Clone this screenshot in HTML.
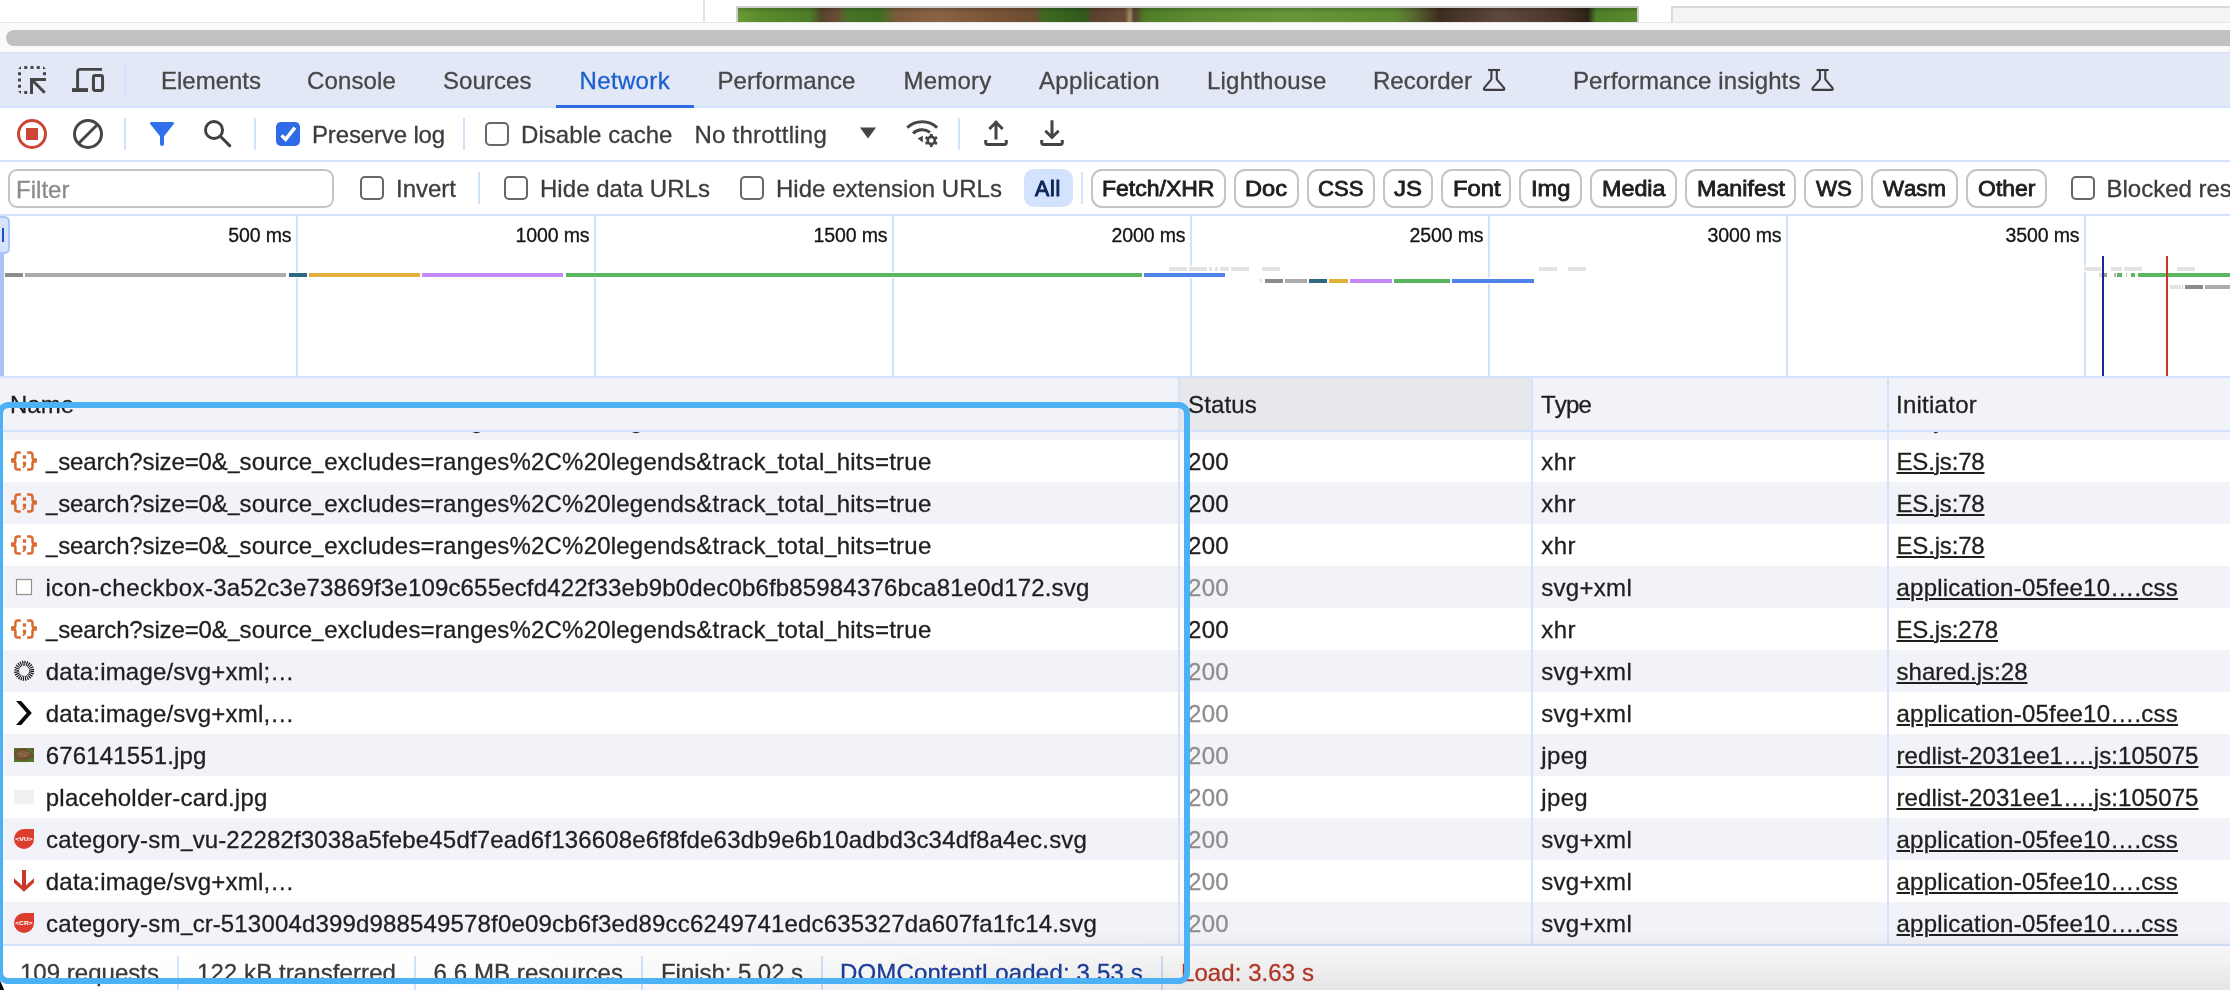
<!DOCTYPE html>
<html lang="en"><head><meta charset="utf-8"><title>DevTools - Network</title>
<style>
html,body{margin:0;padding:0;}
body{width:2230px;height:990px;overflow:hidden;position:relative;background:#fff;font-family:"Liberation Sans",sans-serif;}
.a{position:absolute;}
.t{position:absolute;white-space:pre;line-height:1;font-kerning:none;-webkit-text-stroke:0.3px currentColor;}
i.u{display:inline-block;width:12px;font-style:normal;letter-spacing:0;transform:translateY(-2.3px) scaleX(.86);transform-origin:0 0;}
#txt{position:absolute;left:0;top:0;width:2230px;height:990px;will-change:transform;}
.v{position:absolute;width:2px;background:#d3e3fd;}
.h{position:absolute;height:2px;background:#d3e3fd;left:0;width:2230px;}
.cb{position:absolute;width:20px;height:20px;border:2px solid #676767;border-radius:5px;background:#fff;}
.pill{position:absolute;top:169px;height:35px;border:2px solid #c4c4c4;border-radius:11px;background:#fff;}
svg{position:absolute;overflow:visible;}
</style></head><body>
<div class="a" style="left:703px;top:0;width:2px;height:22px;background:#e4e4e4"></div>
<div class="a" style="left:736px;top:6px;width:903px;height:16px;background:#cfcfcf"></div>
<div class="a" style="left:738px;top:8px;width:899px;height:14px;overflow:hidden;background:linear-gradient(90deg,#6a9a36 0.00%,#5b8c2c 2.45%,#4c7c26 8.01%,#55432c 9.34%,#6b4b36 10.90%,#477327 12.24%,#3f6e22 15.80%,#7c5a3d 17.69%,#8a6343 22.47%,#7a5536 28.03%,#6d4c33 33.04%,#3d6a20 33.93%,#2f5a1a 38.60%,#5a4030 39.49%,#6a4a36 43.05%,#a09064 43.60%,#55402e 44.05%,#4e7e28 45.27%,#5b8a30 50.28%,#67963a 61.40%,#5b8a30 73.08%,#5a6a30 74.97%,#3e2c20 78.09%,#5e4a3c 84.76%,#4a3528 91.43%,#2c2418 94.55%,#4f7f28 95.44%,#5a8a2e 100.00%)"><div class="a" style="left:0;top:0;width:899px;height:14px;background:linear-gradient(180deg,rgba(0,0,0,.18) 0,rgba(0,0,0,0) 35%,rgba(0,0,0,0) 100%)"></div></div>
<div class="a" style="left:1671px;top:6px;width:600px;height:16px;background:#dadada"></div>
<div class="a" style="left:1673px;top:8px;width:600px;height:14px;background:#f4f4f4"></div>
<div class="a" style="left:0;top:22px;width:2230px;height:30px;background:#fafafa;border-top:1px solid #e7e7e7;box-sizing:border-box"></div>
<div class="a" style="left:6px;top:30px;width:2300px;height:16px;border-radius:8px;background:#c1c1c1"></div>
<div class="a" style="left:0;top:52px;width:2230px;height:55px;background:#e3e8f6"></div>
<div class="a" style="left:0;top:52px;width:2230px;height:1px;background:#d5e1fa"></div>
<div class="a" style="left:0;top:106px;width:2230px;height:2px;background:#d3e3fd"></div>
<div class="v" style="left:124px;top:64px;height:32px"></div>
<div class="a" style="left:556px;top:104.6px;width:138px;height:3.4px;background:#2b6be6"></div>
<div class="a" style="left:0;top:108px;width:2230px;height:53px;background:#fff"></div>
<div class="v" style="left:124px;top:118px;height:32px"></div>
<div class="v" style="left:254px;top:118px;height:32px"></div>
<div class="v" style="left:463px;top:118px;height:32px"></div>
<div class="v" style="left:958px;top:118px;height:32px"></div>
<div class="h" style="top:160px"></div>
<div class="a" style="left:8px;top:169px;width:322px;height:35px;border:2px solid #c4c4c4;border-radius:9px;background:#fff"></div>
<div class="v" style="left:478px;top:172px;height:32px"></div>
<div class="v" style="left:1081px;top:172px;height:32px"></div>
<div class="a" style="left:1024px;top:169px;width:49px;height:38px;border-radius:10px;background:#d3e3fd"></div>
<div class="pill" style="left:1091px;width:131px"></div>
<div class="pill" style="left:1234px;width:61px"></div>
<div class="pill" style="left:1307px;width:64px"></div>
<div class="pill" style="left:1383px;width:46px"></div>
<div class="pill" style="left:1441px;width:66px"></div>
<div class="pill" style="left:1519px;width:59px"></div>
<div class="pill" style="left:1590px;width:83px"></div>
<div class="pill" style="left:1685px;width:107px"></div>
<div class="pill" style="left:1804px;width:55px"></div>
<div class="pill" style="left:1871px;width:83px"></div>
<div class="pill" style="left:1966px;width:77px"></div>
<div class="a" style="left:276px;top:122px;width:24px;height:24px;border-radius:5px;background:#2f6be6"><svg style="left:0;top:0" width="24" height="24" viewBox="0 0 24 24"><path d="M5.6 13.4L9.6 17.4L18.9 5.6" fill="none" stroke="#fff" stroke-width="3.4"/></svg></div>
<div class="cb" style="left:485px;top:122px"></div>
<div class="cb" style="left:360px;top:176px"></div>
<div class="cb" style="left:504px;top:176px"></div>
<div class="cb" style="left:740px;top:176px"></div>
<div class="cb" style="left:2071px;top:176px"></div>
<div class="h" style="top:214px"></div>
<div class="a" style="left:0;top:216px;width:2230px;height:160px;background:#fff"></div>
<div class="v" style="left:296px;top:216px;height:160px"></div>
<div class="v" style="left:594px;top:216px;height:160px"></div>
<div class="v" style="left:892px;top:216px;height:160px"></div>
<div class="v" style="left:1190px;top:216px;height:160px"></div>
<div class="v" style="left:1488px;top:216px;height:160px"></div>
<div class="v" style="left:1786px;top:216px;height:160px"></div>
<div class="v" style="left:2084px;top:216px;height:160px"></div>
<div class="a" style="left:0;top:250px;width:4px;height:126px;background:#aac2f6"></div>
<div class="a" style="left:-3px;top:216px;width:12.5px;height:37.5px;background:#d7e3fb;border:2px solid #a9c4f8;border-radius:0 5.5px 5.5px 0;box-sizing:border-box"></div>
<div class="a" style="left:2px;top:228px;width:2px;height:14px;background:#1a4fc8"></div>
<div class="a" style="left:5px;top:273px;width:18px;height:4px;background:#8c8c8c;box-shadow:0 0 0 1px #fff"></div>
<div class="a" style="left:25px;top:273px;width:261.3px;height:4px;background:#ababab;box-shadow:0 0 0 1px #fff"></div>
<div class="a" style="left:288.5px;top:273px;width:18.5px;height:4px;background:#2b6a80;box-shadow:0 0 0 1px #fff"></div>
<div class="a" style="left:308.7px;top:273px;width:111.3px;height:4px;background:#e2b13c;box-shadow:0 0 0 1px #fff"></div>
<div class="a" style="left:421.8px;top:273px;width:141.7px;height:4px;background:#c58af9;box-shadow:0 0 0 1px #fff"></div>
<div class="a" style="left:565.7px;top:273px;width:576.1px;height:4px;background:#5bb660;box-shadow:0 0 0 1px #fff"></div>
<div class="a" style="left:1144px;top:273px;width:81px;height:4px;background:#5083ea;box-shadow:0 0 0 1px #fff"></div>
<div class="a" style="left:1168.7px;top:267px;width:17.9px;height:4px;background:#e3e3e3;box-shadow:0 0 0 1px #fff"></div>
<div class="a" style="left:1188.8px;top:267px;width:18px;height:4px;background:#e3e3e3;box-shadow:0 0 0 1px #fff"></div>
<div class="a" style="left:1208.8px;top:267px;width:3.2px;height:4px;background:#e3e3e3;box-shadow:0 0 0 1px #fff"></div>
<div class="a" style="left:1214.8px;top:267px;width:3.4px;height:4px;background:#e3e3e3;box-shadow:0 0 0 1px #fff"></div>
<div class="a" style="left:1220.4px;top:267px;width:8.2px;height:4px;background:#e3e3e3;box-shadow:0 0 0 1px #fff"></div>
<div class="a" style="left:1231.2px;top:267px;width:17.8px;height:4px;background:#e3e3e3;box-shadow:0 0 0 1px #fff"></div>
<div class="a" style="left:1261.7px;top:267px;width:18.1px;height:4px;background:#e3e3e3;box-shadow:0 0 0 1px #fff"></div>
<div class="a" style="left:1260.2px;top:279px;width:1.5px;height:4px;background:#e3e3e3;box-shadow:0 0 0 1px #fff"></div>
<div class="a" style="left:1264.5px;top:279px;width:18.3px;height:4px;background:#8c8c8c;box-shadow:0 0 0 1px #fff"></div>
<div class="a" style="left:1285px;top:279px;width:21.9px;height:4px;background:#ababab;box-shadow:0 0 0 1px #fff"></div>
<div class="a" style="left:1309px;top:279px;width:18.2px;height:4px;background:#2b6a80;box-shadow:0 0 0 1px #fff"></div>
<div class="a" style="left:1329.1px;top:279px;width:18.9px;height:4px;background:#e2b13c;box-shadow:0 0 0 1px #fff"></div>
<div class="a" style="left:1350px;top:279px;width:42px;height:4px;background:#c58af9;box-shadow:0 0 0 1px #fff"></div>
<div class="a" style="left:1394px;top:279px;width:56px;height:4px;background:#5bb660;box-shadow:0 0 0 1px #fff"></div>
<div class="a" style="left:1452px;top:279px;width:82px;height:4px;background:#5083ea;box-shadow:0 0 0 1px #fff"></div>
<div class="a" style="left:1539px;top:267px;width:18px;height:4px;background:#e3e3e3;box-shadow:0 0 0 1px #fff"></div>
<div class="a" style="left:1568px;top:267px;width:18px;height:4px;background:#e3e3e3;box-shadow:0 0 0 1px #fff"></div>
<div class="a" style="left:2083.6px;top:267px;width:17.4px;height:4px;background:#e3e3e3;box-shadow:0 0 0 1px #fff"></div>
<div class="a" style="left:2111.2px;top:267px;width:10.9px;height:4px;background:#e3e3e3;box-shadow:0 0 0 1px #fff"></div>
<div class="a" style="left:2124.3px;top:267px;width:18px;height:4px;background:#e3e3e3;box-shadow:0 0 0 1px #fff"></div>
<div class="a" style="left:2177px;top:267px;width:18px;height:4px;background:#e3e3e3;box-shadow:0 0 0 1px #fff"></div>
<div class="a" style="left:2099.3px;top:273px;width:2.7px;height:4px;background:#dcdcdc;box-shadow:0 0 0 1px #fff"></div>
<div class="a" style="left:2104px;top:273px;width:2.9px;height:4px;background:#9a9a9a;box-shadow:0 0 0 1px #fff"></div>
<div class="a" style="left:2113.7px;top:273px;width:1.9px;height:4px;background:#b5b5b5;box-shadow:0 0 0 1px #fff"></div>
<div class="a" style="left:2117.2px;top:273px;width:4.7px;height:4px;background:#5bb660;box-shadow:0 0 0 1px #fff"></div>
<div class="a" style="left:2125.5px;top:273px;width:1.2px;height:4px;background:#a5d9a8;box-shadow:0 0 0 1px #fff"></div>
<div class="a" style="left:2130.5px;top:273px;width:4.6px;height:4px;background:#5bb660;box-shadow:0 0 0 1px #fff"></div>
<div class="a" style="left:2137.9px;top:273px;width:92.1px;height:4px;background:#5bb660;box-shadow:0 0 0 1px #fff"></div>
<div class="a" style="left:2170.1px;top:285px;width:10.7px;height:4px;background:#e3e3e3;box-shadow:0 0 0 1px #fff"></div>
<div class="a" style="left:2182px;top:285px;width:1px;height:4px;background:#cfcfcf;box-shadow:0 0 0 1px #fff"></div>
<div class="a" style="left:2185px;top:285px;width:18px;height:4px;background:#8c8c8c;box-shadow:0 0 0 1px #fff"></div>
<div class="a" style="left:2205px;top:285px;width:25px;height:4px;background:#ababab;box-shadow:0 0 0 1px #fff"></div>
<div class="a" style="left:2102px;top:256px;width:2px;height:120px;background:#0b2f8f"></div>
<div class="a" style="left:2166px;top:256px;width:2px;height:120px;background:#c93425"></div>
<div class="h" style="top:376px"></div>
<div class="a" style="left:0;top:378px;width:2230px;height:53px;background:#f2f3f9"></div>
<div class="a" style="left:1180px;top:378px;width:352px;height:53px;background:#e7e8ec"></div>
<div class="h" style="top:430px"></div>
<div class="a" style="left:0;top:432px;width:2230px;height:8px;background:#f2f3f9"></div>
<div class="a" style="left:0;top:440px;width:2230px;height:42px;background:#fff"></div>
<div class="a" style="left:0;top:482px;width:2230px;height:42px;background:#f2f3f9"></div>
<div class="a" style="left:0;top:524px;width:2230px;height:42px;background:#fff"></div>
<div class="a" style="left:0;top:566px;width:2230px;height:42px;background:#f2f3f9"></div>
<div class="a" style="left:0;top:608px;width:2230px;height:42px;background:#fff"></div>
<div class="a" style="left:0;top:650px;width:2230px;height:42px;background:#f2f3f9"></div>
<div class="a" style="left:0;top:692px;width:2230px;height:42px;background:#fff"></div>
<div class="a" style="left:0;top:734px;width:2230px;height:42px;background:#f2f3f9"></div>
<div class="a" style="left:0;top:776px;width:2230px;height:42px;background:#fff"></div>
<div class="a" style="left:0;top:818px;width:2230px;height:42px;background:#f2f3f9"></div>
<div class="a" style="left:0;top:860px;width:2230px;height:42px;background:#fff"></div>
<div class="a" style="left:0;top:902px;width:2230px;height:42px;background:#f2f3f9"></div>
<div class="v" style="left:1178px;top:378px;height:567px"></div>
<div class="v" style="left:1531px;top:378px;height:567px"></div>
<div class="v" style="left:1887px;top:378px;height:567px"></div>
<div class="a" style="left:0;top:944px;width:2230px;height:46px;background:#fff"></div>
<div class="h" style="top:944px"></div>
<div class="v" style="left:177px;top:956px;height:34px"></div>
<div class="v" style="left:414px;top:956px;height:34px"></div>
<div class="v" style="left:641px;top:956px;height:34px"></div>
<div class="v" style="left:821px;top:956px;height:34px"></div>
<div class="v" style="left:1161px;top:956px;height:34px"></div>
<svg style="left:0;top:0" width="2230" height="990" viewBox="0 0 2230 990"><path d="M21 66v3h-3z M43 66l3 3h-3z M18 91h3v3z" fill="#454545"/>
<rect x="24.25" y="66" width="3" height="3" fill="#454545"/>
<rect x="30.5" y="66" width="3" height="3" fill="#454545"/>
<rect x="36.75" y="66" width="3" height="3" fill="#454545"/>
<rect x="18" y="72.25" width="3" height="3" fill="#454545"/>
<rect x="18" y="78.5" width="3" height="3" fill="#454545"/>
<rect x="18" y="84.75" width="3" height="3" fill="#454545"/>
<rect x="43" y="72.25" width="3" height="3" fill="#454545"/>
<rect x="24.25" y="91" width="3" height="3" fill="#454545"/>
<path d="M30 78h16v3h-10.9l10.7 10.7-2.1 2.1-10.7-10.7v10.9h-3z" fill="#454545"/>
<path d="M102 69.4H79.8a2.2 2.2 0 0 0-2.2 2.2V90" fill="none" stroke="#454545" stroke-width="2.9"/>
<rect x="72" y="88.1" width="16" height="3.9" fill="#454545"/>
<rect x="93.45" y="75.55" width="9.1" height="14.9" rx="1.6" fill="none" stroke="#454545" stroke-width="3"/>
<g fill="none" stroke="#3e3e3e" stroke-width="2.1" stroke-linejoin="round" stroke-linecap="round"><path d="M1488.1 70H1500.1" stroke-linecap="butt"/><path d="M1491.4 70V79.3L1484.2 87.9Q1483.1 89.9 1485.4 89.9H1502.8Q1505.1 89.9 1504 87.9L1496.8 79.3V70"/></g>
<g fill="none" stroke="#3e3e3e" stroke-width="2.1" stroke-linejoin="round" stroke-linecap="round"><path d="M1816.6 70H1828.6" stroke-linecap="butt"/><path d="M1819.9 70V79.3L1812.7 87.9Q1811.6 89.9 1813.9 89.9H1831.3Q1833.6 89.9 1832.5 87.9L1825.3 79.3V70"/></g>
<circle cx="32" cy="134" r="13.5" fill="none" stroke="#cb4436" stroke-width="3"/><rect x="26" y="128" width="12" height="12" fill="#cb4436"/>
<circle cx="88" cy="134" r="13.5" fill="none" stroke="#454545" stroke-width="3"/><path d="M78.5 143.5L97.5 124.5" stroke="#454545" stroke-width="3"/>
<path d="M151.2 122h21.6a1.2 1.2 0 0 1 .95 1.95L164 136.3v7.7a2 2 0 0 1-4 0v-7.7l-9.75-12.35a1.2 1.2 0 0 1 .95-1.95z" fill="#3070ec"/>
<circle cx="214" cy="130" r="8.55" fill="none" stroke="#404040" stroke-width="2.9"/><path d="M220.3 136.3L230.6 146.6" stroke="#404040" stroke-width="3"/>
<path d="M860 127.5h16l-8 11z" fill="#454545"/>
<g fill="none" stroke="#454545" stroke-width="3"><path d="M907.3 127.6A22 22 0 0 1 937.1 127.6"/><path d="M913 133.3A13.5 13.5 0 0 1 930 132.4"/></g>
<path d="M917.6 138.6l5.2-2.9v6.9z" fill="#454545"/>
<circle cx="931.3" cy="140.5" r="3.6" fill="none" stroke="#454545" stroke-width="2.6"/>
<path d="M934.94 142.60L937.02 143.80" stroke="#454545" stroke-width="2.8"/>
<path d="M931.30 144.70L931.30 147.10" stroke="#454545" stroke-width="2.8"/>
<path d="M927.66 142.60L925.58 143.80" stroke="#454545" stroke-width="2.8"/>
<path d="M927.66 138.40L925.58 137.20" stroke="#454545" stroke-width="2.8"/>
<path d="M931.30 136.30L931.30 133.90" stroke="#454545" stroke-width="2.8"/>
<path d="M934.94 138.40L937.02 137.20" stroke="#454545" stroke-width="2.8"/>
<g fill="none" stroke="#454545" stroke-width="3"><path d="M996 139.6V120.8M989.3 129L996 122.3l6.7 6.7"/><path d="M985.7 140.1V142.5a2 2 0 0 0 2 2h16.6a2 2 0 0 0 2-2V140.1"/></g>
<g fill="none" stroke="#454545" stroke-width="3"><path d="M1052 120.2V138M1045.3 130.8L1052 137.5l6.7-6.7"/><path d="M1041.7 140.1V142.5a2 2 0 0 0 2 2h16.6a2 2 0 0 0 2-2V140.1"/></g>
<g fill="none" stroke="#d96a30" stroke-width="2.5"><path d="M20.8 452.4H18Q15.4 452.4 15.4 455V457.6Q15.4 460.5 12 460.5Q15.4 460.5 15.4 463.4V467Q15.4 469.6 18 469.6H20.8"/><path d="M27.1 452.4H29.9Q32.5 452.4 32.5 455V457.6Q32.5 460.5 35.9 460.5Q32.5 460.5 32.5 463.4V467Q32.5 469.6 29.9 469.6H27.1"/></g><rect x="11" y="458.3" width="3.2" height="4.4" fill="#d96a30"/><rect x="33.7" y="458.3" width="3.2" height="4.4" fill="#d96a30"/><rect x="22.9" y="455.3" width="3.2" height="3.4" fill="#d96a30"/><path d="M22.9 461.8h3.2v2.6q0 2.6-3 3.8l-.9-1.2q1.4-.8 1.5-2h-.8z" fill="#d96a30"/>
<g fill="none" stroke="#d96a30" stroke-width="2.5"><path d="M20.8 494.4H18Q15.4 494.4 15.4 497V499.6Q15.4 502.5 12 502.5Q15.4 502.5 15.4 505.4V509Q15.4 511.6 18 511.6H20.8"/><path d="M27.1 494.4H29.9Q32.5 494.4 32.5 497V499.6Q32.5 502.5 35.9 502.5Q32.5 502.5 32.5 505.4V509Q32.5 511.6 29.9 511.6H27.1"/></g><rect x="11" y="500.3" width="3.2" height="4.4" fill="#d96a30"/><rect x="33.7" y="500.3" width="3.2" height="4.4" fill="#d96a30"/><rect x="22.9" y="497.3" width="3.2" height="3.4" fill="#d96a30"/><path d="M22.9 503.8h3.2v2.6q0 2.6-3 3.8l-.9-1.2q1.4-.8 1.5-2h-.8z" fill="#d96a30"/>
<g fill="none" stroke="#d96a30" stroke-width="2.5"><path d="M20.8 536.4H18Q15.4 536.4 15.4 539V541.6Q15.4 544.5 12 544.5Q15.4 544.5 15.4 547.4V551Q15.4 553.6 18 553.6H20.8"/><path d="M27.1 536.4H29.9Q32.5 536.4 32.5 539V541.6Q32.5 544.5 35.9 544.5Q32.5 544.5 32.5 547.4V551Q32.5 553.6 29.9 553.6H27.1"/></g><rect x="11" y="542.3" width="3.2" height="4.4" fill="#d96a30"/><rect x="33.7" y="542.3" width="3.2" height="4.4" fill="#d96a30"/><rect x="22.9" y="539.3" width="3.2" height="3.4" fill="#d96a30"/><path d="M22.9 545.8h3.2v2.6q0 2.6-3 3.8l-.9-1.2q1.4-.8 1.5-2h-.8z" fill="#d96a30"/>
<g fill="none" stroke="#d96a30" stroke-width="2.5"><path d="M20.8 620.4H18Q15.4 620.4 15.4 623V625.6Q15.4 628.5 12 628.5Q15.4 628.5 15.4 631.4V635Q15.4 637.6 18 637.6H20.8"/><path d="M27.1 620.4H29.9Q32.5 620.4 32.5 623V625.6Q32.5 628.5 35.9 628.5Q32.5 628.5 32.5 631.4V635Q32.5 637.6 29.9 637.6H27.1"/></g><rect x="11" y="626.3" width="3.2" height="4.4" fill="#d96a30"/><rect x="33.7" y="626.3" width="3.2" height="4.4" fill="#d96a30"/><rect x="22.9" y="623.3" width="3.2" height="3.4" fill="#d96a30"/><path d="M22.9 629.8h3.2v2.6q0 2.6-3 3.8l-.9-1.2q1.4-.8 1.5-2h-.8z" fill="#d96a30"/>
<rect x="16.5" y="579.5" width="15" height="15" fill="#fff" stroke="#90908d" stroke-width="1.2"/>
<circle cx="24.15" cy="670.8" r="7.5" fill="none" stroke="#111" stroke-width="5" stroke-dasharray="1.05 0.9135"/>
<path d="M16.1 701h5.1l10.6 11.9-10.6 12h-5.1l10.6-12z" fill="#0a0a0a"/>
<rect x="14" y="748" width="20" height="14" fill="#6e5130"/><path d="M14 748h6l-3 2-3 1z M26 748h4l4 5v2z M14 757l3 3 8 1.2 9-4.2v5H14z" fill="#4c7a26"/><path d="M17 752q3-2 7-1.5t6 3.500q-1 3-6 3.500t-7-2z" fill="#7d6040"/><path d="M19 753h2v1h-2z M24 755h2v1h-2z M27 752h1v1h-1z" fill="#9a8260"/>
<rect x="14" y="790" width="20" height="14" fill="#f1f1f1"/>
<path d="M24 829 h10 v10 a10 10 0 1 1 -10 -10z" fill="#dc3d2f"/><text x="24" y="841.3" text-anchor="middle" font-family="Liberation Sans, sans-serif" font-weight="bold" font-size="6.2" fill="#fff" textLength="17.6" lengthAdjust="spacingAndGlyphs">&lt;VU&gt;</text>
<path d="M24 913 h10 v10 a10 10 0 1 1 -10 -10z" fill="#dc3d2f"/><text x="24" y="925.3" text-anchor="middle" font-family="Liberation Sans, sans-serif" font-weight="bold" font-size="6.2" fill="#fff" textLength="17.6" lengthAdjust="spacingAndGlyphs">&lt;CR&gt;</text>
<path d="M22 870h4v15.4l7.9-7.2v4.5L23.95 891.8 14 882.7v-4.5l8 7.2z" fill="#c8382b"/></svg>
<div id="txt"><span class="t" style="font-size:24px;top:68.68px;color:#474747;letter-spacing:-0.006px;left:161.00px;">Elements</span>
<span class="t" style="font-size:24px;top:68.68px;color:#474747;letter-spacing:0.134px;left:307.00px;">Console</span>
<span class="t" style="font-size:24px;top:68.68px;color:#474747;letter-spacing:0.065px;left:443.00px;">Sources</span>
<span class="t" style="font-size:24px;top:68.68px;color:#1b5fd1;letter-spacing:0.353px;left:579.50px;">Network</span>
<span class="t" style="font-size:24px;top:68.68px;color:#474747;letter-spacing:0.055px;left:717.50px;">Performance</span>
<span class="t" style="font-size:24px;top:68.68px;color:#474747;letter-spacing:0.221px;left:903.50px;">Memory</span>
<span class="t" style="font-size:24px;top:68.68px;color:#474747;letter-spacing:0.325px;left:1039.00px;">Application</span>
<span class="t" style="font-size:24px;top:68.68px;color:#474747;letter-spacing:0.206px;left:1207.00px;">Lighthouse</span>
<span class="t" style="font-size:24px;top:68.68px;color:#474747;letter-spacing:0.035px;left:1373.00px;">Recorder</span>
<span class="t" style="font-size:24px;top:68.68px;color:#474747;letter-spacing:0.103px;left:1573.00px;">Performance insights</span>
<span class="t" style="font-size:24px;top:122.68px;color:#3c3c3c;letter-spacing:-0.145px;left:312.00px;">Preserve log</span>
<span class="t" style="font-size:24px;top:122.68px;color:#3c3c3c;letter-spacing:0.058px;left:521.00px;">Disable cache</span>
<span class="t" style="font-size:24px;top:122.68px;color:#3c3c3c;letter-spacing:0.238px;left:694.50px;">No throttling</span>
<span class="t" style="font-size:24px;top:177.68px;color:#8a8a8a;letter-spacing:0.026px;left:16.00px;">Filter</span>
<span class="t" style="font-size:24px;top:176.68px;color:#3c3c3c;letter-spacing:-0.005px;left:396.00px;">Invert</span>
<span class="t" style="font-size:24px;top:176.68px;color:#3c3c3c;letter-spacing:0.041px;left:540.00px;">Hide data URLs</span>
<span class="t" style="font-size:24px;top:176.68px;color:#3c3c3c;letter-spacing:0.029px;left:776.00px;">Hide extension URLs</span>
<span class="t" style="font-size:21.3px;top:178.67px;color:#0a2559;letter-spacing:0.776px;-webkit-text-stroke:1px #0a2559;left:1035.00px;">All</span>
<span class="t" style="font-size:21.3px;top:178.67px;color:#1f1f1f;letter-spacing:0.000px;-webkit-text-stroke:0.8px #1f1f1f;transform:scaleX(1.0801);transform-origin:0 0;left:1102.00px;">Fetch/XHR</span>
<span class="t" style="font-size:21.3px;top:178.67px;color:#1f1f1f;letter-spacing:0.000px;-webkit-text-stroke:0.8px #1f1f1f;transform:scaleX(1.1089);transform-origin:0 0;left:1245.00px;">Doc</span>
<span class="t" style="font-size:21.3px;top:178.67px;color:#1f1f1f;letter-spacing:0.000px;-webkit-text-stroke:0.8px #1f1f1f;transform:scaleX(1.0389);transform-origin:0 0;left:1318.00px;">CSS</span>
<span class="t" style="font-size:21.3px;top:178.67px;color:#1f1f1f;letter-spacing:0.000px;-webkit-text-stroke:0.8px #1f1f1f;transform:scaleX(1.1263);transform-origin:0 0;left:1394.00px;">JS</span>
<span class="t" style="font-size:21.3px;top:178.67px;color:#1f1f1f;letter-spacing:0.000px;-webkit-text-stroke:0.8px #1f1f1f;transform:scaleX(1.1144);transform-origin:0 0;left:1452.50px;">Font</span>
<span class="t" style="font-size:21.3px;top:178.67px;color:#1f1f1f;letter-spacing:0.000px;-webkit-text-stroke:0.8px #1f1f1f;transform:scaleX(1.1122);transform-origin:0 0;left:1531.00px;">Img</span>
<span class="t" style="font-size:21.3px;top:178.67px;color:#1f1f1f;letter-spacing:0.000px;-webkit-text-stroke:0.8px #1f1f1f;transform:scaleX(1.0945);transform-origin:0 0;left:1601.50px;">Media</span>
<span class="t" style="font-size:21.3px;top:178.67px;color:#1f1f1f;letter-spacing:0.000px;-webkit-text-stroke:0.8px #1f1f1f;transform:scaleX(1.0932);transform-origin:0 0;left:1696.50px;">Manifest</span>
<span class="t" style="font-size:21.3px;top:178.67px;color:#1f1f1f;letter-spacing:0.000px;-webkit-text-stroke:0.8px #1f1f1f;transform:scaleX(1.0492);transform-origin:0 0;left:1815.50px;">WS</span>
<span class="t" style="font-size:21.3px;top:178.67px;color:#1f1f1f;letter-spacing:0.000px;-webkit-text-stroke:0.8px #1f1f1f;transform:scaleX(1.0440);transform-origin:0 0;left:1883.00px;">Wasm</span>
<span class="t" style="font-size:21.3px;top:178.67px;color:#1f1f1f;letter-spacing:0.000px;-webkit-text-stroke:0.8px #1f1f1f;transform:scaleX(1.0795);transform-origin:0 0;left:1977.50px;">Other</span>
<span class="t" style="font-size:24px;top:176.68px;color:#3c3c3c;letter-spacing:-0.005px;left:2106.50px;">Blocked res</span>
<span class="t" style="font-size:19.5px;top:225.79px;color:#141414;letter-spacing:0.000px;letter-spacing:-0.1px;right:1938.50px;">500 ms</span>
<span class="t" style="font-size:19.5px;top:225.79px;color:#141414;letter-spacing:0.000px;letter-spacing:-0.1px;right:1640.50px;">1000 ms</span>
<span class="t" style="font-size:19.5px;top:225.79px;color:#141414;letter-spacing:0.000px;letter-spacing:-0.1px;right:1342.50px;">1500 ms</span>
<span class="t" style="font-size:19.5px;top:225.79px;color:#141414;letter-spacing:0.000px;letter-spacing:-0.1px;right:1044.50px;">2000 ms</span>
<span class="t" style="font-size:19.5px;top:225.79px;color:#141414;letter-spacing:0.000px;letter-spacing:-0.1px;right:746.50px;">2500 ms</span>
<span class="t" style="font-size:19.5px;top:225.79px;color:#141414;letter-spacing:0.000px;letter-spacing:-0.1px;right:448.50px;">3000 ms</span>
<span class="t" style="font-size:19.5px;top:225.79px;color:#141414;letter-spacing:0.000px;letter-spacing:-0.1px;right:150.50px;">3500 ms</span>
<span class="t" style="font-size:24px;top:392.68px;color:#1f1f1f;letter-spacing:-0.008px;left:10.00px;">Name</span>
<span class="t" style="font-size:24px;top:392.68px;color:#1f1f1f;letter-spacing:0.159px;left:1188.00px;">Status</span>
<span class="t" style="font-size:24px;top:392.68px;color:#1f1f1f;letter-spacing:-0.840px;left:1541.00px;">Type</span>
<span class="t" style="font-size:24px;top:392.68px;color:#1f1f1f;letter-spacing:0.255px;left:1896.00px;">Initiator</span>
<span class="t" style="font-size:24px;top:449.68px;color:#1f1f1f;letter-spacing:-0.146px;left:46.20px;"><i class="u">_</i>search?size=0&amp;</span>
<span class="t" style="font-size:24px;top:449.68px;color:#1f1f1f;letter-spacing:0.092px;left:227.60px;"><i class="u">_</i>source</span>
<span class="t" style="font-size:24px;top:449.68px;color:#1f1f1f;letter-spacing:0.210px;left:312.20px;"><i class="u">_</i>excludes=ranges%2C%20legends&amp;track</span>
<span class="t" style="font-size:24px;top:449.68px;color:#1f1f1f;letter-spacing:0.345px;left:765.60px;"><i class="u">_</i>total</span>
<span class="t" style="font-size:24px;top:449.68px;color:#1f1f1f;letter-spacing:0.231px;left:824.70px;"><i class="u">_</i>hits=true</span>
<span class="t" style="font-size:24px;top:449.68px;color:#1f1f1f;letter-spacing:0.318px;left:1188.00px;">200</span>
<span class="t" style="font-size:24px;top:449.68px;color:#1f1f1f;letter-spacing:0.452px;left:1541.30px;">xhr</span>
<span class="t" style="font-size:24px;top:449.68px;color:#1f1f1f;letter-spacing:-0.174px;left:1896.50px;text-decoration:underline;text-decoration-thickness:2px;text-underline-offset:2px;">ES.js:78</span>
<span class="t" style="font-size:24px;top:491.68px;color:#1f1f1f;letter-spacing:-0.146px;left:46.20px;"><i class="u">_</i>search?size=0&amp;</span>
<span class="t" style="font-size:24px;top:491.68px;color:#1f1f1f;letter-spacing:0.092px;left:227.60px;"><i class="u">_</i>source</span>
<span class="t" style="font-size:24px;top:491.68px;color:#1f1f1f;letter-spacing:0.210px;left:312.20px;"><i class="u">_</i>excludes=ranges%2C%20legends&amp;track</span>
<span class="t" style="font-size:24px;top:491.68px;color:#1f1f1f;letter-spacing:0.345px;left:765.60px;"><i class="u">_</i>total</span>
<span class="t" style="font-size:24px;top:491.68px;color:#1f1f1f;letter-spacing:0.231px;left:824.70px;"><i class="u">_</i>hits=true</span>
<span class="t" style="font-size:24px;top:491.68px;color:#1f1f1f;letter-spacing:0.318px;left:1188.00px;">200</span>
<span class="t" style="font-size:24px;top:491.68px;color:#1f1f1f;letter-spacing:0.452px;left:1541.30px;">xhr</span>
<span class="t" style="font-size:24px;top:491.68px;color:#1f1f1f;letter-spacing:-0.174px;left:1896.50px;text-decoration:underline;text-decoration-thickness:2px;text-underline-offset:2px;">ES.js:78</span>
<span class="t" style="font-size:24px;top:533.68px;color:#1f1f1f;letter-spacing:-0.146px;left:46.20px;"><i class="u">_</i>search?size=0&amp;</span>
<span class="t" style="font-size:24px;top:533.68px;color:#1f1f1f;letter-spacing:0.092px;left:227.60px;"><i class="u">_</i>source</span>
<span class="t" style="font-size:24px;top:533.68px;color:#1f1f1f;letter-spacing:0.210px;left:312.20px;"><i class="u">_</i>excludes=ranges%2C%20legends&amp;track</span>
<span class="t" style="font-size:24px;top:533.68px;color:#1f1f1f;letter-spacing:0.345px;left:765.60px;"><i class="u">_</i>total</span>
<span class="t" style="font-size:24px;top:533.68px;color:#1f1f1f;letter-spacing:0.231px;left:824.70px;"><i class="u">_</i>hits=true</span>
<span class="t" style="font-size:24px;top:533.68px;color:#1f1f1f;letter-spacing:0.318px;left:1188.00px;">200</span>
<span class="t" style="font-size:24px;top:533.68px;color:#1f1f1f;letter-spacing:0.452px;left:1541.30px;">xhr</span>
<span class="t" style="font-size:24px;top:533.68px;color:#1f1f1f;letter-spacing:-0.174px;left:1896.50px;text-decoration:underline;text-decoration-thickness:2px;text-underline-offset:2px;">ES.js:78</span>
<span class="t" style="font-size:24px;top:575.68px;color:#1f1f1f;letter-spacing:0.468px;left:45.50px;">icon-checkbox</span>
<span class="t" style="font-size:24px;top:575.68px;color:#1f1f1f;letter-spacing:0.169px;left:205.00px;">-3a52c3e73869f3e109c655ecfd422f33eb9b0dec0b6fb85984376bca81e0d172.svg</span>
<span class="t" style="font-size:24px;top:575.68px;color:#8e8e8e;letter-spacing:0.318px;left:1188.00px;">200</span>
<span class="t" style="font-size:24px;top:575.68px;color:#1f1f1f;letter-spacing:0.288px;left:1541.30px;">svg+xml</span>
<span class="t" style="font-size:24px;top:575.68px;color:#1f1f1f;letter-spacing:0.222px;left:1896.50px;text-decoration:underline;text-decoration-thickness:2px;text-underline-offset:2px;">application-05fee10….css</span>
<span class="t" style="font-size:24px;top:617.68px;color:#1f1f1f;letter-spacing:-0.146px;left:46.20px;"><i class="u">_</i>search?size=0&amp;</span>
<span class="t" style="font-size:24px;top:617.68px;color:#1f1f1f;letter-spacing:0.092px;left:227.60px;"><i class="u">_</i>source</span>
<span class="t" style="font-size:24px;top:617.68px;color:#1f1f1f;letter-spacing:0.210px;left:312.20px;"><i class="u">_</i>excludes=ranges%2C%20legends&amp;track</span>
<span class="t" style="font-size:24px;top:617.68px;color:#1f1f1f;letter-spacing:0.345px;left:765.60px;"><i class="u">_</i>total</span>
<span class="t" style="font-size:24px;top:617.68px;color:#1f1f1f;letter-spacing:0.231px;left:824.70px;"><i class="u">_</i>hits=true</span>
<span class="t" style="font-size:24px;top:617.68px;color:#1f1f1f;letter-spacing:0.318px;left:1188.00px;">200</span>
<span class="t" style="font-size:24px;top:617.68px;color:#1f1f1f;letter-spacing:0.452px;left:1541.30px;">xhr</span>
<span class="t" style="font-size:24px;top:617.68px;color:#1f1f1f;letter-spacing:-0.137px;left:1896.50px;text-decoration:underline;text-decoration-thickness:2px;text-underline-offset:2px;">ES.js:278</span>
<span class="t" style="font-size:24px;top:659.68px;color:#1f1f1f;letter-spacing:0.196px;left:45.80px;">data:image/svg+xml;…</span>
<span class="t" style="font-size:24px;top:659.68px;color:#8e8e8e;letter-spacing:0.318px;left:1188.00px;">200</span>
<span class="t" style="font-size:24px;top:659.68px;color:#1f1f1f;letter-spacing:0.288px;left:1541.30px;">svg+xml</span>
<span class="t" style="font-size:24px;top:659.68px;color:#1f1f1f;letter-spacing:0.021px;left:1896.50px;text-decoration:underline;text-decoration-thickness:2px;text-underline-offset:2px;">shared.js:28</span>
<span class="t" style="font-size:24px;top:701.68px;color:#1f1f1f;letter-spacing:0.196px;left:45.80px;">data:image/svg+xml,…</span>
<span class="t" style="font-size:24px;top:701.68px;color:#8e8e8e;letter-spacing:0.318px;left:1188.00px;">200</span>
<span class="t" style="font-size:24px;top:701.68px;color:#1f1f1f;letter-spacing:0.288px;left:1541.30px;">svg+xml</span>
<span class="t" style="font-size:24px;top:701.68px;color:#1f1f1f;letter-spacing:0.222px;left:1896.50px;text-decoration:underline;text-decoration-thickness:2px;text-underline-offset:2px;">application-05fee10….css</span>
<span class="t" style="font-size:24px;top:743.68px;color:#1f1f1f;letter-spacing:0.144px;left:45.80px;">676141551.jpg</span>
<span class="t" style="font-size:24px;top:743.68px;color:#8e8e8e;letter-spacing:0.318px;left:1188.00px;">200</span>
<span class="t" style="font-size:24px;top:743.68px;color:#1f1f1f;letter-spacing:0.331px;left:1541.30px;">jpeg</span>
<span class="t" style="font-size:24px;top:743.68px;color:#1f1f1f;letter-spacing:0.069px;left:1896.50px;text-decoration:underline;text-decoration-thickness:2px;text-underline-offset:2px;">redlist-2031ee1….js:105075</span>
<span class="t" style="font-size:24px;top:785.68px;color:#1f1f1f;letter-spacing:0.212px;left:45.80px;">placeholder-card.jpg</span>
<span class="t" style="font-size:24px;top:785.68px;color:#8e8e8e;letter-spacing:0.318px;left:1188.00px;">200</span>
<span class="t" style="font-size:24px;top:785.68px;color:#1f1f1f;letter-spacing:0.331px;left:1541.30px;">jpeg</span>
<span class="t" style="font-size:24px;top:785.68px;color:#1f1f1f;letter-spacing:0.069px;left:1896.50px;text-decoration:underline;text-decoration-thickness:2px;text-underline-offset:2px;">redlist-2031ee1….js:105075</span>
<span class="t" style="font-size:24px;top:827.68px;color:#1f1f1f;letter-spacing:0.241px;left:46.00px;">category-sm</span>
<span class="t" style="font-size:24px;top:827.68px;color:#1f1f1f;letter-spacing:0.070px;left:180.70px;"><i class="u">_</i>vu</span>
<span class="t" style="font-size:24px;top:827.68px;color:#1f1f1f;letter-spacing:0.174px;left:218.20px;">-22282f3038a5febe45df7ead6f136608e6f8fde63db9e6b10adbd3c34df8a4ec.svg</span>
<span class="t" style="font-size:24px;top:827.68px;color:#8e8e8e;letter-spacing:0.318px;left:1188.00px;">200</span>
<span class="t" style="font-size:24px;top:827.68px;color:#1f1f1f;letter-spacing:0.288px;left:1541.30px;">svg+xml</span>
<span class="t" style="font-size:24px;top:827.68px;color:#1f1f1f;letter-spacing:0.222px;left:1896.50px;text-decoration:underline;text-decoration-thickness:2px;text-underline-offset:2px;">application-05fee10….css</span>
<span class="t" style="font-size:24px;top:869.68px;color:#1f1f1f;letter-spacing:0.196px;left:45.80px;">data:image/svg+xml,…</span>
<span class="t" style="font-size:24px;top:869.68px;color:#8e8e8e;letter-spacing:0.318px;left:1188.00px;">200</span>
<span class="t" style="font-size:24px;top:869.68px;color:#1f1f1f;letter-spacing:0.288px;left:1541.30px;">svg+xml</span>
<span class="t" style="font-size:24px;top:869.68px;color:#1f1f1f;letter-spacing:0.222px;left:1896.50px;text-decoration:underline;text-decoration-thickness:2px;text-underline-offset:2px;">application-05fee10….css</span>
<span class="t" style="font-size:24px;top:911.68px;color:#1f1f1f;letter-spacing:0.241px;left:46.00px;">category-sm</span>
<span class="t" style="font-size:24px;top:911.68px;color:#1f1f1f;letter-spacing:0.000px;left:180.70px;"><i class="u">_</i>cr</span>
<span class="t" style="font-size:24px;top:911.68px;color:#1f1f1f;letter-spacing:0.166px;left:212.70px;">-513004d399d988549578f0e09cb6f3ed89cc6249741edc635327da607fa1fc14.svg</span>
<span class="t" style="font-size:24px;top:911.68px;color:#8e8e8e;letter-spacing:0.318px;left:1188.00px;">200</span>
<span class="t" style="font-size:24px;top:911.68px;color:#1f1f1f;letter-spacing:0.288px;left:1541.30px;">svg+xml</span>
<span class="t" style="font-size:24px;top:911.68px;color:#1f1f1f;letter-spacing:0.222px;left:1896.50px;text-decoration:underline;text-decoration-thickness:2px;text-underline-offset:2px;">application-05fee10….css</span>
<span class="t" style="font-size:24px;top:407.68px;color:#1f1f1f;letter-spacing:-0.146px;clip-path:inset(24.3px 0 -10px 0);left:46.20px;"><i class="u" style="visibility:hidden">_</i>search?size=0&amp;</span>
<span class="t" style="font-size:24px;top:407.68px;color:#1f1f1f;letter-spacing:0.092px;clip-path:inset(24.3px 0 -10px 0);left:227.60px;"><i class="u" style="visibility:hidden">_</i>source</span>
<span class="t" style="font-size:24px;top:407.68px;color:#1f1f1f;letter-spacing:0.210px;clip-path:inset(24.3px 0 -10px 0);left:312.20px;"><i class="u" style="visibility:hidden">_</i>excludes=ranges%2C%20legends&amp;track</span>
<span class="t" style="font-size:24px;top:407.68px;color:#1f1f1f;letter-spacing:0.345px;clip-path:inset(24.3px 0 -10px 0);left:765.60px;"><i class="u" style="visibility:hidden">_</i>total</span>
<span class="t" style="font-size:24px;top:407.68px;color:#1f1f1f;letter-spacing:0.231px;clip-path:inset(24.3px 0 -10px 0);left:824.70px;"><i class="u" style="visibility:hidden">_</i>hits=true</span>
<span class="t" style="font-size:24px;top:407.68px;color:#1f1f1f;letter-spacing:-0.174px;clip-path:inset(24.3px 0 -10px 0);left:1896.50px;">ES.js:78</span>
<span class="t" style="font-size:24px;top:960.68px;color:#3b3b3b;letter-spacing:0.020px;left:20.00px;">109 requests</span>
<span class="t" style="font-size:24px;top:960.68px;color:#3b3b3b;letter-spacing:0.087px;left:197.00px;">122 kB transferred</span>
<span class="t" style="font-size:24px;top:960.68px;color:#3b3b3b;letter-spacing:0.089px;left:433.50px;">6.6 MB resources</span>
<span class="t" style="font-size:24px;top:960.68px;color:#3b3b3b;letter-spacing:-0.052px;left:661.00px;">Finish: 5.02 s</span>
<span class="t" style="font-size:24px;top:960.68px;color:#1d3f9e;letter-spacing:0.173px;left:840.00px;">DOMContentLoaded: 3.53 s</span>
<span class="t" style="font-size:24px;top:960.68px;color:#bf3a2b;letter-spacing:0.074px;left:1181.00px;">Load: 3.63 s</span></div>
<div class="a" style="left:0;top:930px;width:2230px;height:60px;pointer-events:none;background:linear-gradient(180deg,rgba(0,0,0,0) 0,rgba(0,0,0,0.03) 30%,rgba(0,0,0,0.10) 100%);-webkit-mask-image:linear-gradient(90deg,rgba(0,0,0,0) 0,rgba(0,0,0,0.1) 20%,rgba(0,0,0,1) 55%);mask-image:linear-gradient(90deg,rgba(0,0,0,0) 0,rgba(0,0,0,0.1) 20%,rgba(0,0,0,1) 55%)"></div>
<svg style="left:0;top:0" width="20" height="990" viewBox="0 0 20 990"><path d="M0 980.6L4.2 990H0z" fill="#0a0a0a"/></svg>
<div class="a" style="left:-3px;top:402px;width:1181px;height:570px;border:6px solid #4db1f6;border-radius:11.5px"></div>
</body></html>
